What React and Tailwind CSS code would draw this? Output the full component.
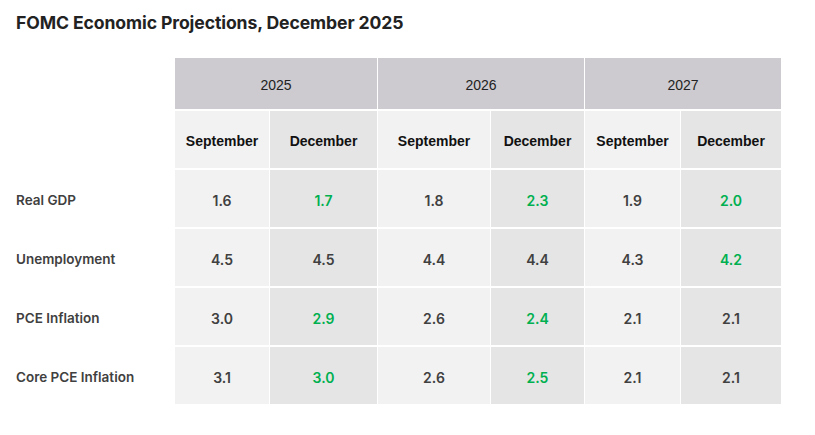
import React from 'react';

const rows = [
    { label: 'Real GDP', values: ['1.6', '1.7', '1.8', '2.3', '1.9', '2.0'], green: [1, 3, 5] },
    { label: 'Unemployment', values: ['4.5', '4.5', '4.4', '4.4', '4.3', '4.2'], green: [5] },
    { label: 'PCE Inflation', values: ['3.0', '2.9', '2.6', '2.4', '2.1', '2.1'], green: [1, 3] },
    { label: 'Core PCE Inflation', values: ['3.1', '3.0', '2.6', '2.5', '2.1', '2.1'], green: [1, 3] },
];

const years = ['2025', '2026', '2027'];

// light / dark shading alternates by column
const shade = (i) => (i % 2 === 0 ? 'bg-[#f2f2f2]' : 'bg-[#e5e5e5]');

const App = () => {
    return (
        <div className="w-[815px] h-[435px] bg-white font-['Inter',sans-serif] overflow-hidden">
            <h1 className="pl-4 pt-[11px] text-[17.6px] leading-[24px] font-bold text-[#222222] tracking-[-0.1px]">
                FOMC Economic Projections, December 2025
            </h1>

            <div className="mt-[23px] grid grid-cols-[174px_94px_107px_112px_93px_95px_100px] gap-x-px gap-y-[2px]">
                {/* Year header */}
                <div className="h-[51px]" />
                {years.map((y) => (
                    <div
                        key={y}
                        className="col-span-2 h-[51px] pt-[3px] flex items-center justify-center bg-[#cdcbd0] text-[14px] text-[#222222] font-['Liberation_Sans',sans-serif]"
                    >
                        {y}
                    </div>
                ))}

                {/* Month header */}
                <div className="h-[57px]" />
                {[0, 1, 2, 3, 4, 5].map((i) => (
                    <div
                        key={i}
                        className={`h-[57px] pt-[3px] flex items-center justify-center ${shade(i)} text-[14px] font-bold text-[#111111] font-['Liberation_Sans',sans-serif]`}
                    >
                        {i % 2 === 0 ? 'September' : 'December'}
                    </div>
                ))}

                {/* Data rows */}
                {rows.map((r) => (
                    <React.Fragment key={r.label}>
                        <div className="h-[57px] pt-[3px] flex items-center pl-4 text-[13.5px] font-semibold text-[#404040]">
                            {r.label}
                        </div>
                        {r.values.map((v, i) => (
                            <div
                                key={i}
                                className={`h-[57px] pt-[3px] flex items-center justify-center ${shade(i)} text-[14px] font-semibold ${r.green.includes(i) ? 'text-[#00b050]' : 'text-[#404040]'}`}
                            >
                                {v}
                            </div>
                        ))}
                    </React.Fragment>
                ))}
            </div>
        </div>
    );
};

export default App;
